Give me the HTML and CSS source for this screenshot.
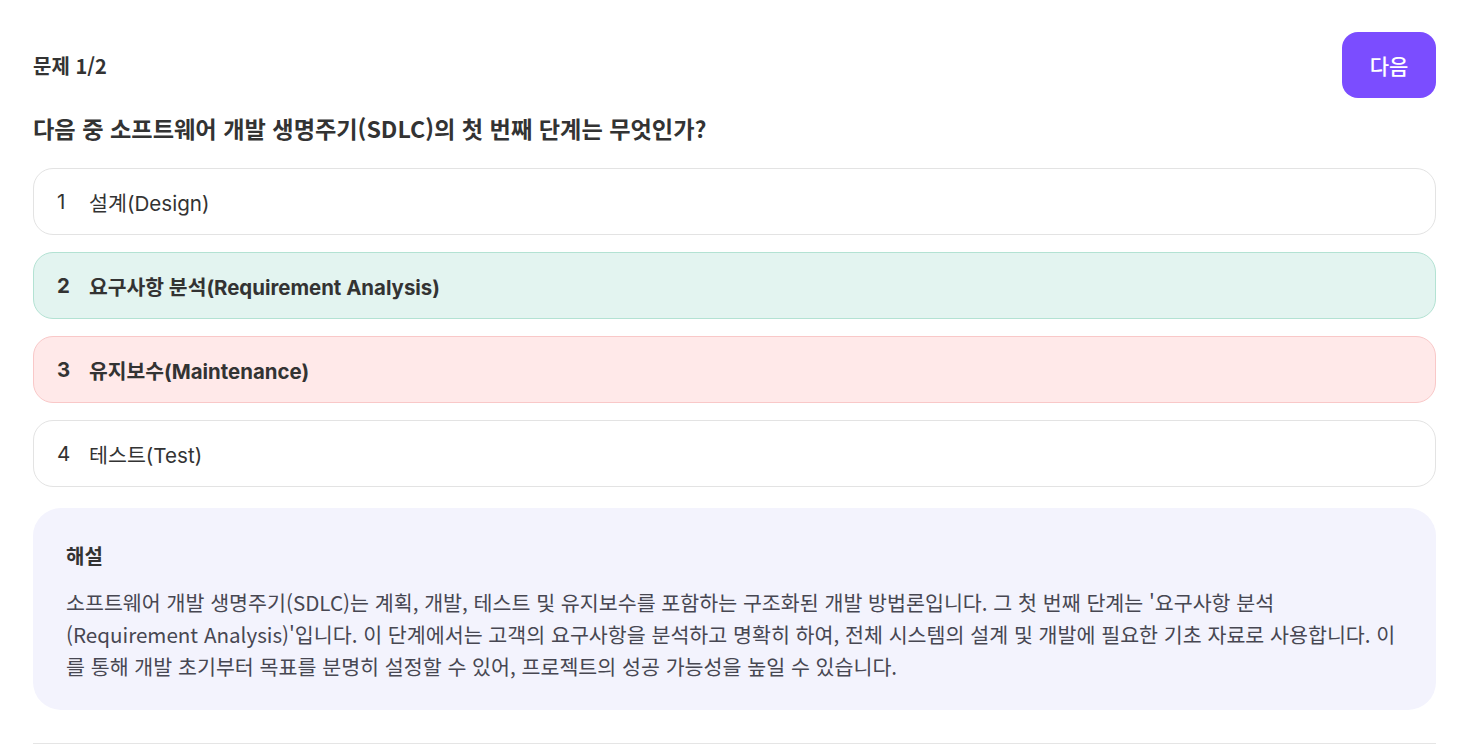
FILE: index.html
```html
<!DOCTYPE html>
<html lang="ko">
<head>
<meta charset="utf-8">
<link rel="stylesheet" href="styles.css">
</head>
<body>
<main class="quiz">
  <header class="quiz-head">
    <div class="counter">문제 1/2</div>
    <button class="next">다음</button>
  </header>
  <h1 class="question">다음 중 소프트웨어 개발 생명주기(SDLC)의 첫 번째 단계는 무엇인가?</h1>
  <ul class="options">
    <li class="option"><span class="num">1</span><span>설계(Design)</span></li>
    <li class="option correct"><span class="num">2</span><span>요구사항 분석(Requirement Analysis)</span></li>
    <li class="option wrong"><span class="num">3</span><span>유지보수(Maintenance)</span></li>
    <li class="option"><span class="num">4</span><span>테스트(Test)</span></li>
  </ul>
  <section class="explain">
    <h2>해설</h2>
    <p>소프트웨어 개발 생명주기(SDLC)는 계획, 개발, 테스트 및 유지보수를 포함하는 구조화된 개발 방법론입니다. 그 첫 번째 단계는 '요구사항 분석(Requirement Analysis)'입니다. 이 단계에서는 고객의 요구사항을 분석하고 명확히 하여, 전체 시스템의 설계 및 개발에 필요한 기초 자료로 사용합니다. 이를 통해 개발 초기부터 목표를 분명히 설정할 수 있어, 프로젝트의 성공 가능성을 높일 수 있습니다.</p>
  </section>
  <div class="divider"></div>
</main>
</body>
</html>
```

FILE: styles.css
```css
* { box-sizing: border-box; }
html, body { margin: 0; padding: 0; background: #fff; }
body {
  font-family: "Noto Sans CJK KR", sans-serif;
  color: #333;
}
.quiz {
  padding: 32px 31px 0 33px;
}
.quiz-head {
  display: flex;
  justify-content: space-between;
  align-items: center;
  height: 66px;
}
.counter {
  font-size: 20px;
  font-weight: 700;
  color: #333;
}
.next {
  width: 94px;
  height: 66px;
  border: none;
  border-radius: 16px;
  background: #7b4dff;
  color: #fff;
  font-family: "Noto Sans CJK KR", sans-serif;
  font-size: 21px;
  font-weight: 500;
  padding: 0;
}
.question {
  margin: 10px 0 0;
  font-size: 23.2px;
  font-weight: 700;
  line-height: 40px;
  color: #333;
}
.options {
  list-style: none;
  margin: 20px 0 0;
  padding: 0;
  display: flex;
  flex-direction: column;
  gap: 17px;
}
.option {
  height: 67px;
  border: 1px solid #e3e3e3;
  border-radius: 20px;
  display: flex;
  align-items: center;
  padding-left: 23px;
  font-family: Inter, "Noto Sans CJK KR", sans-serif;
  font-size: 20.6px;
  color: #333;
}
.option .num { width: 32px; }
.option.correct {
  background: #e3f4f0;
  border-color: #b3e2d3;
  font-weight: 700;
  font-size: 20.4px;
}
.option.wrong {
  background: #ffe9e9;
  border-color: #f9c8c8;
  font-weight: 700;
  font-size: 20.4px;
}
.explain {
  margin-top: 21px;
  background: #f3f3fd;
  border-radius: 28px;
  padding: 32px 30px 28px 33px;
}
.explain h2 {
  margin: 0;
  font-size: 20px;
  font-weight: 700;
  line-height: 32px;
  color: #333;
}
.explain p {
  margin: 14px 0 0;
  font-size: 20.6px;
  line-height: 32px;
  color: #474752;
}
.divider {
  margin-top: 33px;
  height: 1px;
  background: #e5e5e5;
}
```
